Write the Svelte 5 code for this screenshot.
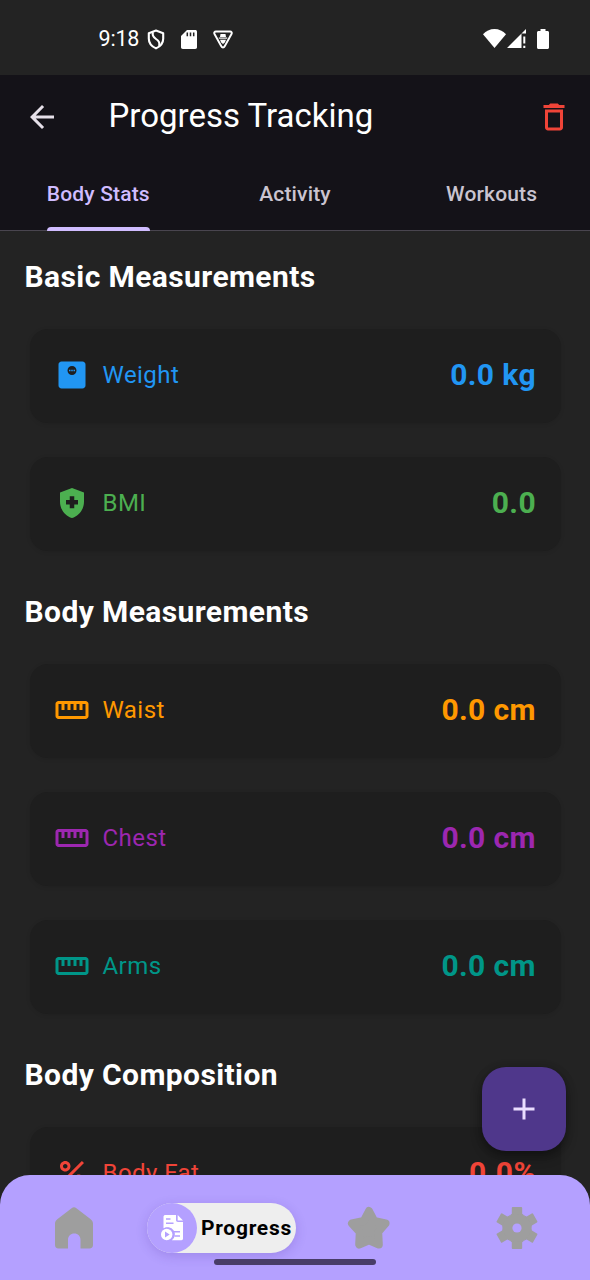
<script>
  const ruler = 'M21 6H3c-1.1 0-2 .9-2 2v8c0 1.1.9 2 2 2h18c1.1 0 2-.9 2-2V8c0-1.1-.9-2-2-2zm0 10H3V8h2v4h2V8h2v4h2V8h2v4h2V8h2v4h2V8h2v8z';
  const scale = 'M19 3H5c-1.1 0-2 .9-2 2v14c0 1.1.9 2 2 2h14c1.1 0 2-.9 2-2V5c0-1.1-.9-2-2-2zm-7 9c-1.66 0-3-1.34-3-3s1.34-3 3-3 3 1.34 3 3-1.34 3-3 3zM10 8.5h1v1h-1zM11.5 8.5h1v1h-1zM13 8.5h1v1h-1z';
  const shield = 'M12 2L4 5v6.09c0 5.05 3.41 9.76 8 10.91 4.59-1.15 8-5.86 8-10.91V5l-8-3zm4 11h-2.5v2.5h-3V13H8v-3h2.5V7.5h3V10H16v3z';
  const percent = 'M7.5 11C9.43 11 11 9.43 11 7.5S9.43 4 7.5 4 4 5.57 4 7.5 5.57 11 7.5 11zm0-5C8.33 6 9 6.67 9 7.5S8.33 9 7.5 9 6 8.33 6 7.5 6.67 6 7.5 6zM4 18.58L18.59 4 20 5.41 5.41 20zM16.5 13c-1.93 0-3.5 1.57-3.5 3.5s1.57 3.5 3.5 3.5 3.5-1.57 3.5-3.5-1.57-3.5-3.5-3.5zm0 5c-.83 0-1.5-.67-1.5-1.5s.67-1.5 1.5-1.5 1.5.67 1.5 1.5-.67 1.5-1.5 1.5z';

  const sections = [
    { title: 'Basic Measurements', rows: [
      { label: 'Weight', value: '0.0 kg', tone: 'blue', icon: scale },
      { label: 'BMI', value: '0.0', tone: 'green', icon: shield }
    ] },
    { title: 'Body Measurements', rows: [
      { label: 'Waist', value: '0.0 cm', tone: 'orange', icon: ruler },
      { label: 'Chest', value: '0.0 cm', tone: 'purple', icon: ruler },
      { label: 'Arms', value: '0.0 cm', tone: 'teal', icon: ruler }
    ] },
    { title: 'Body Composition', rows: [
      { label: 'Body Fat', value: '0.0%', tone: 'red', icon: percent }
    ] }
  ];
  const tabs = ['Body Stats', 'Activity', 'Workouts'];
  let active = $state('Body Stats');
</script>

<div class="screen">
  <div class="status">
    <div class="left">
      <span class="time">9:18</span>
      <svg class="s-shield" width="18" height="21" viewBox="0 0 18 21" fill="none" stroke="#fff" stroke-width="2.1" stroke-linejoin="round">
        <path d="M9 1.5L1.8 4.2v5.5c0 4 2.9 7.7 7.2 9.7 4.300-2 7.200-5.700 7.200-9.700V4.200z" />
        <path d="M6 3.200C4.800 6.500 6.500 8.300 9 10c3 2 4.300 4 3 7" />
      </svg>
      <svg class="s-sd" width="16" height="19" viewBox="0 0 16 19"><path fill="#fff" d="M6 0h8.200C15.300 0 16 .7 16 1.700v15.600c0 1-.7 1.700-1.800 1.700H1.800C.7 19 0 18.300 0 17.300V6z" /><path d="M6.300 2.500v3.700M9.500 2.500v3.700M12.700 2.500v3.700" stroke="#232323" stroke-width="1.500" /></svg>
      <svg class="s-tri" width="20" height="19" viewBox="0 0 20 19" fill="none" stroke="#fff" stroke-width="1.900" stroke-linejoin="round"><path d="M3 1.500h14c1.500 0 2.200 1.200 1.500 2.500l-6.800 12.300c-.8 1.500-2.600 1.500-3.400 0L1.500 4C.8 2.700 1.500 1.500 3 1.500z" /><path d="M5.800 8.100h8.400" stroke-width="1.200" /><path d="M7 9.800h6l-1.200 2.800L10 14l-1.800-1.400zM7 7l.5-3h5l.5 3z" fill="#fff" stroke="none" /></svg>
    </div>
    <div class="right">
      <svg width="23" height="19" viewBox="0 0 23 19"><path fill="#fff" d="M11.500 19L0 5.300C3 2 7 0 11.500 0S20 2 23 5.300z" /></svg>
      <svg class="s-cell" width="19" height="19" viewBox="0 0 19 19" fill="#fff"><path d="M0 19L19 0v4.500h-4.500V19zM16.300 7.500h2v7h-2zM16.300 16.700h2V19h-2z" /></svg>
      <svg class="s-bat" width="12" height="20" viewBox="0 0 12 20"><path fill="#fff" d="M3.500 0h5v2h2c.8 0 1.500.6 1.500 1.500v15c0 .9-.7 1.500-1.500 1.500h-9C.7 20 0 19.400 0 18.500v-15C0 2.600.7 2 1.500 2h2z" /></svg>
    </div>
  </div>

  <header>
    <div class="bar">
      <button aria-label="Back"><svg width="36" height="36" viewBox="0 0 24 24" fill="#e6e0e9"><path d="M20 11H7.830l5.590-5.590L12 4l-8 8 8 8 1.410-1.410L7.830 13H20v-2z" /></svg></button>
      <h1>Progress Tracking</h1>
      <button aria-label="Delete"><svg width="36" height="36" viewBox="0 0 24 24" fill="#f04438"><path d="M6 19c0 1.100.9 2 2 2h8c1.100 0 2-.9 2-2V7H6v12zM8 9h8v10H8V9zm7.500-5l-1-1h-5l-1 1H5v2h14V4z" /></svg></button>
    </div>
    <nav class="tabs">
      {#each tabs as tab}
        <button class:active={active === tab} onclick={() => (active = tab)}><span>{tab}</span></button>
      {/each}
    </nav>
  </header>

  <main>
    {#each sections as section}
      <section>
        <h2>{section.title}</h2>
        {#each section.rows as row}
          <div class="card {row.tone}">
            <svg width="36" height="36" viewBox="0 0 24 24" fill="currentColor"><path d={row.icon} /></svg>
            <span class="label">{row.label}</span>
            <span class="value">{row.value}</span>
          </div>
        {/each}
      </section>
    {/each}
  </main>

  <button class="fab" aria-label="Add"><svg width="36" height="36" viewBox="0 0 24 24" fill="#eaddff"><path d="M19 13h-6v6h-2v-6H5v-2h6V5h2v6h6v2z" /></svg></button>

  <nav class="bottom">
    <svg width="38" height="42" viewBox="0 0 38 42"><path fill="#9e9e9e" d="M16.600 1.200c1.600-1.200 3.200-1.200 4.800 0l14.300 11c1.500 1.200 2.300 2.600 2.300 4.500V38c0 2.200-1.300 3.500-3.500 3.500H25.500V33c0-4-2.500-6.500-6.200-6.500S13 29 13 33v8.500H3.500C1.300 41.500 0 40.200 0 38V16.700c0-1.900.8-3.300 2.300-4.500z" /></svg>
    <div class="pill">
      <span class="disc">
        <svg width="22" height="26" viewBox="0 0 22 26">
          <path fill="#fff" d="M4.500 0H15v5c0 1.200.8 2 2 2h5v16.500c0 1-.6 1.700-1.600 1.700h-9.500a7 7 0 0 0-8.400-11.700V1.700C2.500.7 3.400 0 4.500 0z" />
          <path fill="#fff" d="M16.700 0L22 5.400h-5.300z" />
          <circle cx="5.700" cy="19.500" r="6.900" fill="#b4a0ff" />
          <circle cx="5.700" cy="19.500" r="5.700" fill="#fff" />
          <path fill="#b4a0ff" d="M4 16.500v6l4.700-3z" />
          <path d="M5 4h4.500M5 8.300h7.500M12.500 16.700h6.500M13.500 21h5.500" stroke="#b4a0ff" stroke-width="1.400" />
        </svg>
      </span>
      <span class="name">Progress</span>
    </div>
    <svg class="star" width="44" height="44" viewBox="0 0 44 44"><path fill="#9e9e9e" stroke="#9e9e9e" stroke-width="8" stroke-linejoin="round" d="M22 5l5.100 9.800L38.500 17.500l-7.300 8.500.6 12.500L22 34.300 12.200 38.500l.6-12.500L5 17.500l11.900-2.700z" /></svg>
    <svg class="gear" width="44" height="44" viewBox="-22 -22 44 44">
      <g fill="#9e9e9e">
        {#each [0, 60, 120, 180, 240, 300] as angle}
          <path transform="rotate({angle})" d="M-5.200-20q0-1 1-1h8.400q1 0 1 1v5.800l2.500 2H-7.700l2.500-2z" />
        {/each}
        <circle r="14" />
      </g>
      <circle r="4.600" fill="#b4a0ff" />
    </svg>
    <i class="handle"></i>
  </nav>
</div>

<style>
  :global(body) { margin: 0; background: #232323; }
  .screen { position: relative; width: 590px; height: 1280px; overflow: hidden; background: #232323; color: #fff; font-family: Roboto, sans-serif; display: flex; flex-direction: column; }
  svg { display: block; flex: none; }
  button { border: 0; padding: 0; background: none; font: inherit; color: inherit; }
  .status { height: 74.500px; flex: none; box-sizing: border-box; padding: 0 41.500px 0 98.500px; display: flex; justify-content: space-between; }
  .left, .right { display: flex; align-items: center; height: 78px; }
  .time { font-size: 21.500px; width: 48.500px; letter-spacing: -.2px; line-height: 24px; }
  .s-sd { margin-left: 16px; }
  .s-tri { margin-left: 15.500px; }
  .s-cell { margin-left: 1px; }
  .s-bat { margin-left: 11px; }
  .right { height: 77px; }
  header { flex: none; height: 156.500px; background: #141218; display: flex; flex-direction: column; }
  .bar { height: 84.500px; display: flex; align-items: center; padding: 0 18px 0 24px; }
  h1 { margin: 0 0 2px 48.500px; flex: 1; font-size: 33px; font-weight: 400; line-height: 42px; }
  .tabs { height: 72px; display: grid; grid-template-columns: repeat(3, 1fr); box-sizing: border-box; border-bottom: 1.500px solid #49454f; }
  .tabs button { display: flex; justify-content: center; color: #cac4d0; font-size: 21px; font-weight: 500; letter-spacing: .17px; }
  .tabs span { height: 72px; box-sizing: border-box; line-height: 70px; }
  .tabs .active { color: #d0bcff; }
  .tabs .active span { display: grid; grid-template-rows: 68px 4px; }
  .tabs .active span::after { content: ''; background: #d0bcff; border-radius: 4px 4px 0 0; }
  main { padding: 24px 29px 0 30px; }
  h2 { margin: 0 0 31px -5.500px; padding-top: 1px; font-size: 30px; font-weight: 700; line-height: 42px; letter-spacing: .4px; }
  section { margin-bottom: 39.200px; }
  .card { height: 94px; box-sizing: border-box; border-radius: 18px; background: #1e1e1e; box-shadow: 0 1px 4px rgba(0,0,0,.1); display: flex; align-items: center; padding: 0 25px 2px 24px; }
  .card + .card { margin-top: 34px; }
  .label { margin-left: 12.500px; flex: 1; font-size: 24px; letter-spacing: .45px; }
  .value { font-size: 30px; font-weight: 700; letter-spacing: .4px; margin-bottom: 1px; }
  .blue { color: #2196f3; } .green { color: #4caf50; } .orange { color: #ff9800; }
  .purple { color: #9c27b0; } .teal { color: #009688; } .red { color: #f04438; }
  .fab { position: absolute; left: 482px; top: 1067px; width: 84px; height: 84px; border-radius: 24px; background: #4f378b; display: grid; place-items: center; box-shadow: 0 6px 12px rgba(0,0,0,.32), 0 1px 10px rgba(0,0,0,.2); }
  .bottom { position: absolute; inset: auto 0 0; height: 105px; border-radius: 30px 30px 0 0; background: #b4a0ff; display: grid; grid-template-columns: repeat(4, 1fr); place-items: center; }
  .star { margin-right: 1px; }
  .pill { width: 149px; height: 50px; border-radius: 25px; background: #eee; display: flex; align-items: center; box-shadow: 0 3px 12px rgba(60,30,140,.18); }
  .disc { width: 50px; height: 50px; border-radius: 50%; background: #b4a0ff; display: grid; place-items: center; flex: none; }
  .name { color: #000; font-size: 21px; font-weight: 700; margin-left: 4px; letter-spacing: .72px; white-space: nowrap; }
  .handle { position: absolute; left: 214px; bottom: 15px; width: 162px; height: 6px; border-radius: 3px; background: #483d68; }
</style>
